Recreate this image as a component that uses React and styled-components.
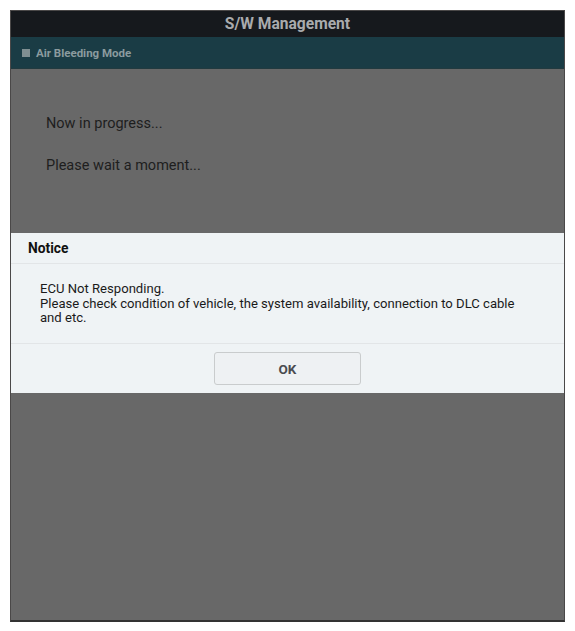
import React from "react";
import styled, { createGlobalStyle } from "styled-components";

const Global = createGlobalStyle`
  html, body { margin: 0; padding: 0; background: #ffffff; }
  body { font-family: Roboto, "Liberation Sans", Arial, sans-serif; }
`;

const Page = styled.div`
  padding: 10px;
  width: 575px;
  height: 631px;
  box-sizing: border-box;
`;

const Frame = styled.div`
  position: relative;
  width: 555px;
  height: 612px;
  box-sizing: border-box;
  border: 1px solid #4a4848;
  border-bottom: 2px solid #333;
  background: #686868;
  display: flex;
  flex-direction: column;
`;

const Header = styled.div`
  height: 26px;
  background: #16191d;
  color: #a9abad;
  font-size: 15.6px;
  font-weight: 700;
  display: flex;
  align-items: center;
  justify-content: center;
`;

const SubBar = styled.div`
  height: 31px;
  background: #1a3c45;
  border-bottom: 1px solid #223a3f;
  display: flex;
  align-items: center;
  gap: 6px;
  padding-left: 11px;
  color: #8b9b9f;
  font-size: 11.5px;
  font-weight: 700;
`;

const Square = styled.span`
  width: 8px;
  height: 8px;
  background: #7f8e91;
`;

const Content = styled.div`
  flex: 1;
  padding: 46px 0 0 35px;
  display: flex;
  flex-direction: column;
  gap: 25px;
  color: #1e1e1e;
  font-size: 14.5px;
`;

const Line = styled.div`
  line-height: 17px;
`;

const Dialog = styled.div`
  position: absolute;
  left: 0;
  right: 0;
  top: 222px;
  background: #eff3f5;
  display: flex;
  flex-direction: column;
`;

const Title = styled.div`
  height: 30px;
  display: flex;
  align-items: center;
  padding-left: 17px;
  font-size: 13.8px;
  font-weight: 700;
  color: #111;
  border-bottom: 1px solid #e2e5e7;
`;

const Body = styled.div`
  padding: 18px 30px 17px 29px;
  font-size: 13.1px;
  line-height: 14.5px;
  color: #1a1a1a;
  border-bottom: 1px solid #e2e5e7;
`;

const Footer = styled.div`
  height: 49px;
  display: flex;
  align-items: center;
  justify-content: center;
`;

const Button = styled.button`
  width: 147px;
  height: 33px;
  box-sizing: border-box;
  border: 1px solid #c9cccd;
  border-radius: 3px;
  background: #eef1f3;
  font-family: Roboto, "Liberation Sans", Arial, sans-serif;
  font-size: 13.5px;
  font-weight: 700;
  color: #4a4c50;
  margin-top: 1px;
`;

export default function App() {
  return (
    <Page>
      <Global />
      <Frame>
        <Header>S/W Management</Header>
        <SubBar>
          <Square />
          Air Bleeding Mode
        </SubBar>
        <Content>
          <Line>Now in progress...</Line>
          <Line>Please wait a moment...</Line>
        </Content>
        <Dialog>
          <Title>Notice</Title>
          <Body>
            ECU Not Responding.
            <br />
            Please check condition of vehicle, the system availability, connection to DLC cable and etc.
          </Body>
          <Footer>
            <Button>OK</Button>
          </Footer>
        </Dialog>
      </Frame>
    </Page>
  );
}
